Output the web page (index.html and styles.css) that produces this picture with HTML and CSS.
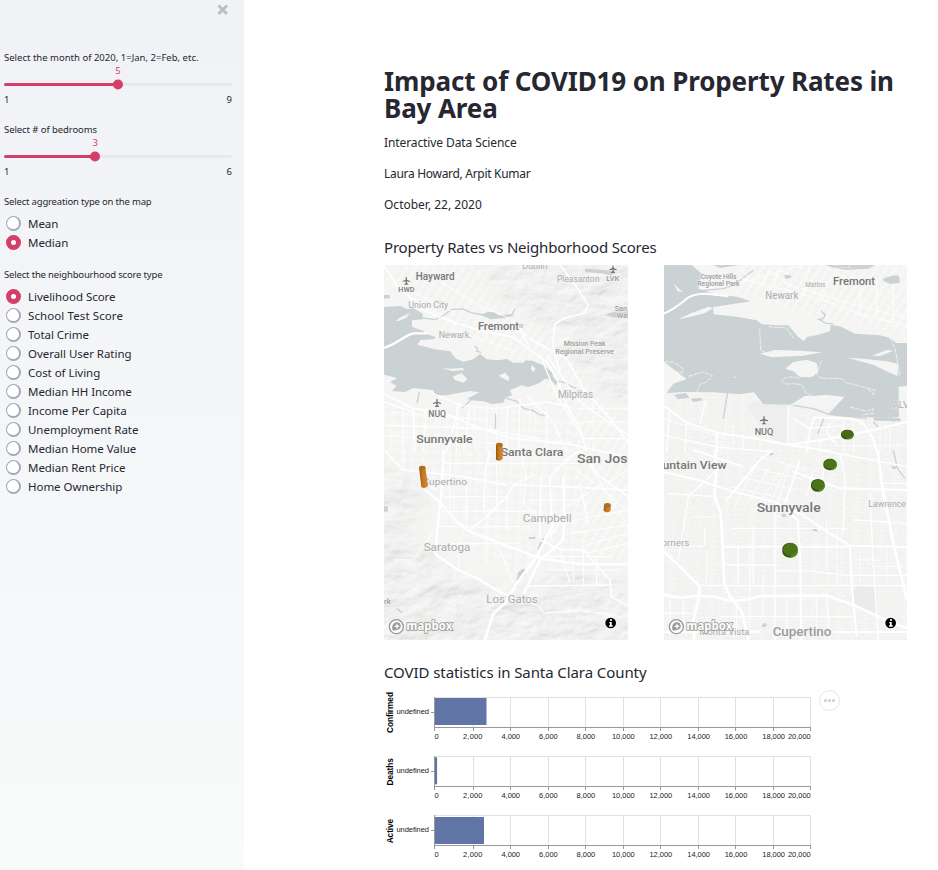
FILE: index.html
```html
<!DOCTYPE html>
<html lang="en">
<head>
<meta charset="utf-8">
<title>Impact of COVID19 on Property Rates in Bay Area</title>
<link rel="stylesheet" href="styles.css">
</head>
<body>
<div class="app">
  <aside class="sidebar">
    <div class="close"><svg width="12" height="12" viewBox="0 0 12 12"><path d="M1.500 1.500l8.500 8.500M10 1.500l-8.500 8.500"/></svg></div>
    <section class="slider">
      <div class="label l-month">Select the month of 2020, 1=Jan, 2=Feb, etc.</div>
      <div class="track-wrap" style="--v:50%"><span class="value">5</span><div class="track"><i class="thumb"></i></div></div>
      <div class="range"><span>1</span><span>9</span></div>
    </section>
    <section class="slider">
      <div class="label l-bed">Select # of bedrooms</div>
      <div class="track-wrap" style="--v:40%"><span class="value">3</span><div class="track"><i class="thumb"></i></div></div>
      <div class="range"><span>1</span><span>6</span></div>
    </section>
    <section class="group">
      <div class="label l-agg">Select aggreation type on the map</div>
      <div class="radio"><i></i><span>Mean</span></div>
      <div class="radio on"><i></i><span>Median</span></div>
    </section>
    <section class="group">
      <div class="label l-score">Select the neighbourhood score type</div>
      <div class="radio on"><i></i><span>Livelihood Score</span></div>
      <div class="radio"><i></i><span class="wide">School Test Score</span></div>
      <div class="radio"><i></i><span>Total Crime</span></div>
      <div class="radio"><i></i><span>Overall User Rating</span></div>
      <div class="radio"><i></i><span>Cost of Living</span></div>
      <div class="radio"><i></i><span>Median HH Income</span></div>
      <div class="radio"><i></i><span>Income Per Capita</span></div>
      <div class="radio"><i></i><span>Unemployment Rate</span></div>
      <div class="radio"><i></i><span>Median Home Value</span></div>
      <div class="radio"><i></i><span>Median Rent Price</span></div>
      <div class="radio"><i></i><span>Home Ownership</span></div>
    </section>
  </aside>
  <main class="main">
    <h1>Impact of COVID19 on Property Rates in<br>Bay Area</h1>
    <p class="course">Interactive Data Science</p>
    <p class="authors">Laura Howard, Arpit Kumar</p>
    <p>October, 22, 2020</p>
    <h3>Property Rates vs Neighborhood Scores</h3>
    <div class="maps">
      <svg class="map" width="244" height="375" viewBox="0 0 244 375">
        <defs>
          <filter id="relief" x="0" y="0" width="100%" height="100%">
            <feTurbulence type="fractalNoise" baseFrequency=".035 .055" numOctaves="4" seed="8"/>
            <feDiffuseLighting surfaceScale="2" diffuseConstant="1.14" lighting-color="#efefee"><feDistantLight azimuth="235" elevation="60"/></feDiffuseLighting>
          </filter>
          <filter id="soft" x="-30%" y="-30%" width="160%" height="160%"><feGaussianBlur stdDeviation="7"/></filter>
          <mask id="hills"><g fill="#fff" filter="url(#soft)">
            <path d="M90 0H250V150L225 130 190 98 160 60 125 40z" opacity=".7"/>
            <path d="M-10 198L25 212 45 240 25 265 60 300 105 322 140 325 180 300 250 315V390H-10z" opacity=".7"/>
          </g></mask>
          <pattern id="gridA" width="11" height="9" patternUnits="userSpaceOnUse" patternTransform="rotate(3)"><path d="M0 0H11M0 0V9" stroke="#ebebea" stroke-width=".9"/><path d="M5 0V6M5 5H11" stroke="#fff" stroke-width="1"/></pattern>
          <pattern id="gridB" width="8" height="7" patternUnits="userSpaceOnUse" patternTransform="rotate(33)"><path d="M0 0H8M0 0V7" stroke="#ebebea" stroke-width=".8"/><path d="M4 0V7" stroke="#fff" stroke-width=".8"/></pattern>
        </defs>
        <rect width="244" height="375" fill="#f5f5f4"/>
        <path d="M0 140L60 145 150 140 200 160 205 290 140 310 80 285 50 240 0 200z" fill="url(#gridA)" opacity=".6"/>
        <path d="M20 0H90L155 55 215 130 244 160V300L195 285 190 180 150 100 60 65 0 10z" fill="url(#gridB)" opacity=".7"/>
        <rect width="244" height="375" filter="url(#relief)" mask="url(#hills)"/>
        <g transform="translate(-4 -3) scale(.33333)">
          <path class="water" fill-rule="evenodd" d="M12 135L62 132 80 141 100 138 128 155 128 172 95 175 97 195 130 207 140 216 168 226 160 232 122 234 112 248 165 262 210 268 228 290 250 299 280 292 300 275 320 292 355 295 380 291 400 302 430 302 437 295 458 297 490 310 516 330 520 346 534 360 528 370 510 352 495 350 480 362 446 375 425 370 390 385 396 400 375 408 370 422 335 426 310 418 270 414 262 410 298 391 270 387 240 392 200 400 165 400 160 385 100 378 75 390 35 387 50 372 30 360 52 348 12 338zM186 318L210 320 248 318 255 324 215 327zM218 344L245 333 262 352 250 362 226 355zM356 341L375 332 387 345 386 358 372 350zM455 309L467 320 460 331 453 321zM48 176L60 167 90 153 78 168 55 177z"/>
          <path class="water" d="M12 99L29 99 30 108 12 110zM304 158L325 150 343 151 355 160 395 156 403 160 375 168 330 172zM615 20L640 22 680 25 707 30 696 40 660 34 616 31zM675 160L690 152 744 144 744 167 700 166zM415 190l8-5 8 2-2 10-12 1zM230 180l14 3-4 7zM344 500l7 0-2-45-4 0z"/>
          <path class="stream" d="M128 168L165 173 190 160 216 142 248 141 273 152 310 159M395 159L405 140M246 438L275 412M376 408L410 418 432 440 460 446 478 458 494 460M520 355L555 362 580 377 590 378M284 252L292 259 290 268 304 271M111 423L118 390"/>
          <path class="road w7" d="M12 258C55 245 72 220 100 214L142 214"/>
          <path class="road w5" d="M12 10L50 70 130 145 190 170 300 205 400 225 450 265 500 300 530 350 560 430 600 500 620 570M12 395L100 440 200 455 300 500 400 530 560 545 744 585M450 230L560 290 610 380 690 470 744 540M540 9L590 75 625 130 610 155 560 165 525 185 518 250 540 330"/>
          <path class="road w4" d="M12 420L100 450 105 570M240 420L200 570M150 390L240 430 345 440 500 420 570 435M320 430V570M383 430L380 570M420 410L416 570M440 400L520 480 560 570M270 430L250 570M20 490L300 500 480 530M500 280L600 420 744 520M420 200L450 260M480 280L530 400 610 530 744 530"/>
          <path class="road w2" d="M180 60L300 130 390 170 450 230M30 450L320 475M12 520L350 545M70 440V570M140 430L130 570M230 430V570M285 430V570M350 430V570M450 440V570M500 430V570M640 420V570M590 440H744M560 480H744M20 50L160 155M80 80L220 150M120 120L230 190M210 200L410 270"/>
          <path class="plane" transform="translate(79 56)" d="M-2-10h4v7l9 4v3l-9-2v5l4 3v2H-6v-2l4-3V2l-9 2V1l9-4z"/>
          <path class="plane" transform="translate(699 21)" d="M-2-10h4v7l9 4v3l-9-2v5l4 3v2H-6v-2l4-3V2l-9 2V1l9-4z"/>
          <path class="plane" transform="translate(171 423)" d="M-2-12h4v8l10 4v3l-10-2v6l4 3v2H-6v-2l4-3V1l-10 2V0l10-4z"/>
          <g class="ml">
            <text class="c1" x="107" y="55" font-size="30" textLength="117" lengthAdjust="spacingAndGlyphs">Hayward</text>
            <text class="c1" x="55" y="91" font-size="20" textLength="48" lengthAdjust="spacingAndGlyphs">HWD</text>
            <text class="c3" x="85" y="137" font-size="27" textLength="120" lengthAdjust="spacingAndGlyphs">Union City</text>
            <text class="c1" x="294" y="204" font-size="34" textLength="123" lengthAdjust="spacingAndGlyphs">Fremont</text>
            <text class="c3" x="176" y="229" font-size="29" textLength="99" lengthAdjust="spacingAndGlyphs">Newark.</text>
            <text class="c3" x="427" y="20" font-size="26" textLength="75" lengthAdjust="spacingAndGlyphs">Dublin</text>
            <text class="c3" x="531" y="61" font-size="27" textLength="127" lengthAdjust="spacingAndGlyphs">Pleasanton</text>
            <text class="c2" x="679" y="56" font-size="24" textLength="39" lengthAdjust="spacingAndGlyphs">LVK</text>
            <text class="c2" x="704" y="147" font-size="22">San</text>
            <text class="c2" x="710" y="169" font-size="22">Wat</text>
            <text class="c2" x="551" y="251" font-size="23" textLength="125" lengthAdjust="spacingAndGlyphs">Mission Peak</text>
            <text class="c2" x="526" y="276" font-size="23" textLength="176" lengthAdjust="spacingAndGlyphs">Regional Preserve</text>
            <text class="c3" x="534" y="407" font-size="30" textLength="105" lengthAdjust="spacingAndGlyphs">Milpitas</text>
            <text class="c1" x="145" y="464" font-size="26" textLength="53" lengthAdjust="spacingAndGlyphs">NUQ</text>
            <text class="c1" x="109" y="543" font-size="35" textLength="169" lengthAdjust="spacingAndGlyphs">Sunnyvale</text>
          </g>
        </g>
        <g transform="translate(-4 185) scale(.33333)">
          <path class="water" d="M12 168l12 2v14l-12 2zM446 262l20-2v6l-20 2zM472 298l12-30 10-4-6 20-14 16zM409 392l6-25 14-11 12 5-4 12-20 20zM46 473l12 4 12 14-10-4z"/>
          <path class="road w8" d="M314 570L340 490 375 460 410 400 470 320 500 260 522 222"/>
          <path class="road w7" d="M134 118L180 158 230 215 265 243 330 268 420 302 480 325 600 342 744 343M165 312L185 120 190 0M165 312L230 357 298 388 340 415 380 435M430 432L480 330 550 270 553 190 550 80"/>
          <path class="road w5" d="M265 243L320 200 380 140 400 105 460 75M310 190L316 60 330 0M400 105L600 112 744 120M480 265L482 80M515 230L510 80 560 30 600 0M480 270L540 298 610 300 690 390 695 440 744 468M440 408L690 405M600 0L660 80 744 140M550 200L510 260M12 0L70 60 250 80 380 105M600 100L625 222"/>
          <path class="road w3" d="M185 184L475 184M420 0L440 80 430 160 480 210M70 60V0M240 260L235 357M320 200V340M380 140V240M210 0V180M260 80V240M350 0V180M180 230H450M200 280H420M540 298L570 400M610 300V405M460 320H700M500 360H720M540 220L744 180M570 250L744 225M600 290L744 250M620 310L744 280M540 180L744 60M590 60L744 180M620 30L744 230M190 140H380M190 40H430M450 150H600M430 40H600M360 300L400 400M580 320V400M650 320V410M165 240L100 330 40 330M380 435L480 470 490 490 600 480 720 500"/>
          <g class="ml">
            <text class="c3" x="127" y="104" font-size="29" textLength="134" lengthAdjust="spacingAndGlyphs">Cupertino</text>
            <text class="c1" x="362" y="17" font-size="33" textLength="188" lengthAdjust="spacingAndGlyphs">Santa Clara</text>
            <text class="c1" x="591" y="38" font-size="39" textLength="174" lengthAdjust="spacingAndGlyphs">San Jose</text>
            <text class="c3" x="428" y="215" font-size="32" textLength="147" lengthAdjust="spacingAndGlyphs">Campbell</text>
            <text class="c3" x="131" y="304" font-size="32" textLength="140" lengthAdjust="spacingAndGlyphs">Saratoga</text>
            <text class="c3" x="319" y="458" font-size="33" textLength="154" lengthAdjust="spacingAndGlyphs">Los Gatos</text>
            <text class="c2" x="12" y="461" font-size="24">rk</text>
          </g>
          <linearGradient id="or"><stop stop-color="#8f5616"/><stop offset=".4" stop-color="#c37720"/><stop offset="1" stop-color="#d38a32"/></linearGradient>
          <g fill="url(#or)">
            <path d="M348-17Q358-26 368-17V27Q358 36 348 29z"/>
            <path d="M117 52Q126 43 136 52L144 108Q134 118 124 111z"/>
            <path d="M672 164H692V182Q682 192 671 182z"/>
          </g>
          <g fill="#b26d1b"><ellipse cx="358" cy="-16" rx="10" ry="6"/><ellipse cx="127" cy="53" rx="9.500" ry="6"/><ellipse cx="682" cy="166" rx="10" ry="7"/></g>
          <use href="#badge"/>
        </g>
      </svg>
      <svg class="map" width="243" height="375" viewBox="0 0 243 375">
        <defs>
          <pattern id="gridC" width="13" height="11" patternUnits="userSpaceOnUse" patternTransform="rotate(2)"><path d="M0 0H13M0 0V11M3 3V9M7 3H12V8H6" stroke="#ebebea" stroke-width=".9" fill="none"/></pattern>
          <g id="badge">
            <circle cx="49" cy="530" r="21" fill="#fff" fill-opacity=".8" stroke="#999" stroke-width="4"/>
            <path d="M39 540C36 525 42 518 50 518A10 10 0 0 1 52 538Q46 541 39 540z" fill="#999" stroke="#999" stroke-width="3"/>
            <path d="M51 520l3 6 6 3-6 3-3 6-3-6-6-3 6-3z" fill="#f5f5f4"/>
            <text x="79" y="540" class="brand" font-size="35" textLength="138" lengthAdjust="spacingAndGlyphs">mapbox</text>
            <circle cx="692" cy="519" r="16" fill="#000"/>
            <circle cx="693" cy="510" r="3.200" fill="#fff"/>
            <path d="M688 516h7v10h3v4h-11v-4h3v-6h-2z" fill="#fff"/>
          </g>
        </defs>
        <rect width="243" height="375" fill="#f5f5f4"/>
        <path d="M80 0H243V70L170 55 130 45 70 30z" fill="url(#gridB)" opacity=".75"/>
        <path d="M0 128L90 130 243 155V375H0z" fill="url(#gridC)" opacity=".8"/>
        <g transform="translate(-4 -3) scale(.33333)">
          <path d="M258 430L290 415 310 427 340 427 385 430 383 543 340 535 300 490z" fill="#eeeeee"/>
          <path class="water" fill-rule="evenodd" d="M12 9H95L125 35 115 80 160 95 235 105 272 118 225 125 160 135 160 157 235 165 290 175 305 187 350 190 385 190 415 225 432 237 440 225 475 218 510 208 512 188 540 193 585 215 660 220 690 228 708 243 741 243V372L716 374 717 465 672 468 580 464 505 457 553 405 500 398 462 402 435 402 391 428 310 427 282 391 240 397 160 391 70 390 20 393 40 365 80 352 12 300zM300 275L345 264 420 266 487 271 430 281 335 286zM376 320L400 300 440 293 470 303 475 330 455 346 420 345 400 328zM562 287L610 290 680 298 714 305 713 343 680 328 640 308zM55 172L95 153 145 134 160 138 135 153 85 166zM40 63L53 77 69 91 52 87zM635 281L680 264 700 266 660 282z"/>
          <path class="water" d="M160 9H240L180 18zM372 40l15-2 10 8-20 5zM495 9H645L625 20 560 24 520 17zM668 51L700 40 718 42 719 62 690 66 672 58zM42 398l35-5 12 14-35 5zM92 410l30-3 8 8-30 5zM640 468h80l3 10-80-2z"/>
          <path class="stream" d="M483 147L496 158 490 170 476 172 500 184 520 185M208 350L203 390 190 470M125 86L190 80 220 70 280 25M493 465L485 485 473 515M400 430L460 440 510 458 620 470M640 480L655 495M692 465L700 480"/>
          <path class="shore" d="M299 200L302 265 315 271M325 194L380 198 402 230M485 295L470 335 480 348 545 350 560 362 610 375 645 385 640 398 625 380M370 350Q385 340 420 350M366 352Q366 370 400 365L425 368 440 395 460 402M12 300L40 300 70 320 65 333 30 325 20 350 55 348M85 343L130 330 158 341 140 360 120 367 110 390M690 228L705 260 720 340M220 345l10 3M570 435L620 448 640 440 640 455 605 458"/>
          <path class="road w6" d="M12 155Q45 140 75 114Q100 93 145 96L205 103M12 432L80 482 170 512 290 530 385 548 510 568M170 512L172 570M439 570L450 505 463 466 580 470 610 485 640 530 650 570M385 548L480 535 610 511 741 480"/>
          <path class="road w4" d="M138 415L120 485M80 482L75 570M385 430L383 545M400 470L450 500 550 490M510 480L500 510 530 550M12 520L170 555 340 570M30 440L20 570"/>
          <path class="road w2" d="M130 80L250 60 430 9M190 35L370 82 490 115 610 160 741 190M300 9L390 70 590 130 741 170M200 480L180 570M220 480V570M250 515V570M300 530V570M420 540V570M480 535V570M550 470V570M580 470V570M660 480V570M690 480V570M12 470L200 530M530 550H741M240 20L270 50M330 20L310 70M360 9L340 80M450 9L430 100M500 90L480 120M600 80V160M650 50V170M700 70V180"/>
          <path class="plane" transform="translate(312 475)" d="M-2-12h4v8l10 4v3l-10-2v6l4 3v2H-6v-2l4-3V1l-10 2V0l10-4z"/>
          <g class="ml">
            <text class="c3" x="521" y="16" font-size="22" textLength="59" lengthAdjust="spacingAndGlyphs">Colony</text>
            <text class="c2" x="122" y="51" font-size="20" textLength="107" lengthAdjust="spacingAndGlyphs">Coyote Hills</text>
            <text class="c2" x="112" y="72" font-size="20" textLength="127" lengthAdjust="spacingAndGlyphs">Regional Park</text>
            <text class="c3" x="316" y="110" font-size="30" textLength="99" lengthAdjust="spacingAndGlyphs">Newark</text>
            <text class="c3" x="436" y="76" font-size="20" textLength="60" lengthAdjust="spacingAndGlyphs">Mattos</text>
            <text class="c1" x="519" y="69" font-size="34" textLength="126" lengthAdjust="spacingAndGlyphs">Fremont</text>
            <text class="c1" x="284" y="520" font-size="28" textLength="56" lengthAdjust="spacingAndGlyphs">NUQ</text>
            <text class="c3" x="698" y="438" font-size="28">ALV</text>
          </g>
          <path d="M543 516A19 13 0 0 1 581 516V520A19 12 0 0 1 543 520z" fill="#2f4c10"/><path d="M560 530L581 516V520A19 12 0 0 1 560 532z" fill="#588621"/><ellipse cx="562" cy="516" rx="18" ry="12" fill="#436b16"/>
        </g>
        <g transform="translate(-4 185) scale(.33333)">
          <path d="M580 420L590 408 648 410 650 500 620 488 583 468z" fill="#ebebec"/>
          <path class="water" d="M365 192l12-1 3 9-14 1zM455 240l14-9 3 15zM322 10l14-4 6 7-10 4zM305 526l8-7 7 3-3 9-12 0zM692 50l12-2 8 6-10 4z"/>
          <path class="stream" d="M700 0L712 55 735 85"/>
          <path class="road w8" d="M165 0L170 60 163 135 182 190 187 270 193 400 210 440 245 485 265 570M12 305L70 360 120 410 115 450 100 510 103 570M12 433Q55 450 100 438Q165 435 195 450Q240 458 300 438L500 437 580 465 700 520 741 535M653 0L665 100 700 280 741 450"/>
          <path class="road w6" d="M12 545H300M520 546H741M12 66L120 92 220 125 340 155 430 195 500 245 570 287 741 291M395 195L413 210 420 310 424 570M190 290H570M570 287L575 405 590 560M420 30L400 90 375 160M100 0L250 50M200 150L300 30 340 0M400 65L540 115 741 120"/>
          <path class="road w4" d="M345 190V570M280 230V405M235 290V400M210 235H560M200 345H350M110 407H741M345 362H440L560 376 741 376M500 437L510 570M630 130L640 345 655 570M540 10L555 80 550 250M85 140L55 330M85 140L170 60M135 235V290M460 60L440 140M500 20L480 120M20 130L170 140M580 210L741 220M12 490H100M180 500H440M130 290L12 280M440 500H580M480 0L741 50M660 100H741"/>
          <path class="road w2" d="M220 180L280 60M250 180L330 50M280 190L355 70M320 180L380 50M350 170L390 40M210 110L390 150M240 80L410 120M270 50L430 90M300 20L440 60M500 200V360M530 240V420M600 300V400M680 300V400M640 350H741M580 330H660M270 300V520M230 460V560M310 380V500M380 440V560M470 440V560M140 300V400M70 450V550M30 450V550M100 200H180"/>
          <g class="ml">
            <text class="c1" x="-46" y="57" font-size="34" textLength="246" lengthAdjust="spacingAndGlyphs">Mountain View</text>
            <text class="c1" x="290" y="185" font-size="39" textLength="192" lengthAdjust="spacingAndGlyphs">Sunnyvale</text>
            <text class="c3" x="625" y="172" font-size="26" textLength="113" lengthAdjust="spacingAndGlyphs">Lawrence</text>
            <text class="c3" x="-15" y="289" font-size="27" textLength="103" lengthAdjust="spacingAndGlyphs">Corners</text>
            <text class="c3" x="118" y="556" font-size="25" textLength="150" lengthAdjust="spacingAndGlyphs">Monta Vista</text>
            <text class="c2" x="338" y="559" font-size="37" textLength="176" lengthAdjust="spacingAndGlyphs">Cupertino</text>
          </g>
          <g fill="#375614"><path d="M490 41A20 15 0 0 1 530 41V46A20 15 0 0 1 490 46zM453 103A20.500 16 0 0 1 494 103V109A20 16 0 0 1 453 109zM367 297A23 19 0 0 1 413 297V305A23 18 0 0 1 367 305z"/></g>
          <g fill="#5d8d24"><path d="M512 60L530 43V47A20 15 0 0 1 512 61zM474 123L494 105V110A20 16 0 0 1 474 125zM390 321L413 299V305A23 18 0 0 1 390 323z"/></g>
          <g fill="#4b7318"><ellipse cx="511" cy="42" rx="19" ry="14"/><ellipse cx="474" cy="104" rx="19" ry="15"/><ellipse cx="391" cy="298" rx="21" ry="19"/></g>
          <use href="#badge"/>
        </g>
      </svg>
    </div>
    <h3 class="covid">COVID statistics in Santa Clara County</h3>
    <div class="chart-row">
      <svg class="chart" width="430" height="176" viewBox="384 690 430 176">
        <defs>
          <g id="axes">
            <path d="M434.500 697.500H810.500V727M473.500 697V727M510.500 697V727M548.500 697V727M585.500 697V727M623.500 697V727M660.500 697V727M698.500 697V727M735.500 697V727M773.500 697V727" stroke="#e0e0e0" fill="none"/>
            <g class="ticks">
              <text x="434.500" y="739">0</text><text x="463" y="739" textLength="19.500">2,000</text><text x="501.500" y="739" textLength="18.500">4,000</text><text x="539" y="739" textLength="18.700">6,000</text><text x="576.500" y="739" textLength="18.700">8,000</text><text x="612" y="739" textLength="22.700">10,000</text><text x="649.500" y="739" textLength="22.700">12,000</text><text x="687.300" y="739" textLength="22.700">14,000</text><text x="724.700" y="739" textLength="22.700">16,000</text><text x="762.300" y="739" textLength="22.700">18,000</text><text x="788" y="739" textLength="22.700">20,000</text>
              <text x="396.500" y="714.300" textLength="32.500">undefined</text>
            </g>
          </g>
          <path id="rule" d="M434.500 697V731M431 712.500H434.500M434 727.500H811M473.500 727V731M510.500 727V731M548.500 727V731M585.500 727V731M623.500 727V731M660.500 727V731M698.500 727V731M735.500 727V731M773.500 727V731M810.500 727V731" stroke="#999" fill="none"/>
        </defs>
        <use href="#axes"/><rect x="434.500" y="698" width="52" height="27" fill="#6074a6"/><use href="#rule"/>
        <use href="#axes" y="59"/><rect x="434.500" y="757.300" width="2.600" height="27" fill="#6074a6"/><use href="#rule" y="59"/>
        <use href="#axes" y="118"/><rect x="434.500" y="817" width="49.500" height="27" fill="#6074a6"/><use href="#rule" y="118"/>
        <g class="titles">
          <text transform="translate(392.500 733) rotate(-90)" textLength="41">Confirmed</text>
          <text transform="translate(392.500 785.500) rotate(-90)" textLength="27.500">Deaths</text>
          <text transform="translate(392.500 843.300) rotate(-90)" textLength="24.500">Active</text>
        </g>
      </svg>
      <div class="menu"><i></i><i></i><i></i></div>
    </div>
  </main>
</div>
</body>
</html>
```
FILE: styles.css
```css
* { box-sizing: border-box; }
body { margin: 0; background: #fff; color: #262730; font: 12px/18px "Noto Sans", sans-serif; overflow: hidden; }
.app { display: flex; height: 870px; }
.sidebar { width: 244px; flex: none; padding: 0 12px 0 4px; background: linear-gradient(180deg, #f0f2f6, #f9fafa); }
.close { display: flex; justify-content: flex-end; height: 51px; padding: 4px 3px 0 0; }
.close path { stroke: #bcbdc2; stroke-width: 2.8; fill: none; }
.label { height: 14px; font-size: 9.5px; line-height: 14px; white-space: nowrap; }
.l-month { letter-spacing: .01px; }
.l-bed { letter-spacing: -.08px; }
.l-agg { letter-spacing: -.18px; }
.l-score { letter-spacing: -.17px; }
.slider { height: 72px; }
.track-wrap { display: grid; grid-template-rows: 13px 14px; }
.value { justify-self: start; margin-left: var(--v); transform: translate(-50%, -1px); color: #d33f69; font-size: 9.5px; line-height: 13px; }
.track { height: 3px; margin-top: 5px; border-radius: 2px; background: linear-gradient(90deg, #d33f69 var(--v), #e6e8ee var(--v)); }
.thumb { display: block; width: 10px; height: 10px; margin-left: var(--v); transform: translate(-50%, -3.5px); border-radius: 50%; background: #d33f69; }
.range { display: flex; justify-content: space-between; font-size: 9.5px; line-height: 15px; }
.group { margin-bottom: 15.5px; }
.group .label { margin-bottom: 5.5px; }
.group .l-agg { margin-bottom: 5px; }
.radio { display: flex; align-items: center; height: 19px; padding-left: 2px; gap: 7px; }
.radio i { width: 15px; height: 15px; border-radius: 50%; background: #fff; border: 1.5px solid #a3a8b8; border-right-width: 2px; border-bottom-width: 2px; }
.radio.on i { border: 5.5px solid #d33f69; }
.radio span { font-size: 11.5px; line-height: 19px; letter-spacing: -.04px; }
.radio .wide { letter-spacing: .1px; }
.main { width: 523px; margin-left: 140px; padding-top: 68px; flex: none; }
h1 { margin: 0 0 12px; font-size: 26px; line-height: 27px; font-weight: 700; letter-spacing: -.13px; white-space: nowrap; }
p { margin: 0 0 13px; }
.course { letter-spacing: -.1px; }
.authors { letter-spacing: -.3px; }
h3 { margin: 23px 0 8px; font-size: 15px; line-height: 20px; font-weight: 400; letter-spacing: -.19px; white-space: nowrap; }
.maps { display: flex; justify-content: space-between; }
.map { display: block; overflow: hidden; }
.covid { margin: 22px 0 8px; letter-spacing: -.08px; }
.water { fill: #cbd2d3; }
.stream { fill: none; stroke: #cbd2d3; stroke-width: 4; }
.shore { fill: none; stroke: #f5f5f4; stroke-width: 2.5; stroke-dasharray: 14 3; }
.road { fill: none; stroke: #fff; stroke-linejoin: round; }
.w8 { stroke-width: 8; }
.w7 { stroke-width: 7; }
.w6 { stroke-width: 6; }
.w5 { stroke-width: 5; }
.w4 { stroke-width: 4; }
.w3 { stroke-width: 3; }
.w2 { stroke-width: 2.5; }
.plane { fill: #777; }
.ml { font-family: Roboto, sans-serif; paint-order: stroke; stroke: #f5f5f4; stroke-width: 3px; }
.c1 { fill: #777; font-weight: 500; }
.c2 { fill: #9c9c9c; font-weight: 500; }
.c3 { fill: #acacac; }
.brand { font-family: "Open Sans", sans-serif; font-weight: 700; fill: #fff; stroke: #999; stroke-width: 5px; paint-order: stroke; }
.chart-row { display: flex; align-items: flex-start; }
.chart { flex: none; font-family: "Liberation Sans", sans-serif; }
.ticks { font-size: 7.5px; fill: #222; }
.titles { font-size: 8.3px; font-weight: 700; fill: #000; }
.menu { display: flex; align-items: center; justify-content: center; gap: 1.3px; flex: none; width: 21px; height: 21px; margin-left: 5px; border: 1px solid #e6e6e6; border-radius: 50%; }
.menu i { width: 3px; height: 3px; border-radius: 50%; background: #ccc; }
```
